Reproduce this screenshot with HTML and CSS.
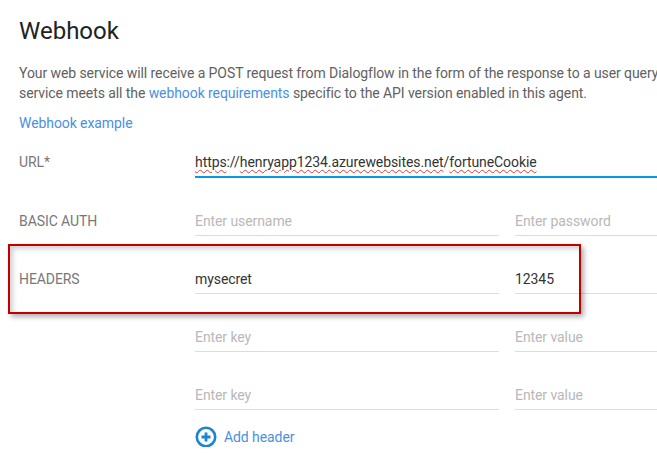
FILE: index.html
```html
<!DOCTYPE html>
<html>
<head>
<meta charset="utf-8">
<link rel="stylesheet" href="styles.css">
</head>
<body>
<div class="page">
  <h1 class="title">Webhook</h1>
  <p class="desc">
    <span class="line">Your web service will receive a POST request from Dialogflow in the form of the response to a user query</span>
    <span class="line">service meets all the <a class="link">webhook requirements</a> specific to the API version enabled in this agent.</span>
  </p>
  <div class="example"><a class="link">Webhook example</a></div>

  <div class="form">
    <div class="label">URL*</div>
    <div class="field field-wide field-focus"><span class="typo">https</span>://<span class="typo">henryapp1234.azurewebsites.net</span>/<span class="typo">fortuneCookie</span></div>

    <div class="label">BASIC AUTH</div>
    <div class="field placeholder">Enter username</div>
    <div class="field placeholder">Enter password</div>

    <div class="label">HEADERS</div>
    <div class="field">mysecret</div>
    <div class="field">12345</div>

    <div class="label"></div>
    <div class="field placeholder">Enter key</div>
    <div class="field placeholder">Enter value</div>

    <div class="label"></div>
    <div class="field placeholder">Enter key</div>
    <div class="field placeholder">Enter value</div>
  </div>

  <div class="add">
    <svg class="add-icon" width="22" height="22" viewBox="0 0 22 22">
      <circle cx="11" cy="11" r="9.2" fill="none" stroke="#1a84d6" stroke-width="2.6"/>
      <path d="M11 6.5v9M6.5 11h9" stroke="#1a84d6" stroke-width="2.8" stroke-linecap="butt"/>
    </svg>
    <span class="add-text">Add header</span>
  </div>

  <div class="highlight"></div>
</div>
</body>
</html>
```

FILE: styles.css
```css
html, body {
  margin: 0;
  padding: 0;
  background: #ffffff;
  overflow: hidden;
}

.page {
  position: relative;
  width: 900px;
  padding: 16px 0 0 19px;
  font-family: Roboto, "Liberation Sans", sans-serif;
  color: #616161;
  letter-spacing: -0.08px;
}

.title {
  margin: 0;
  font-size: 24px;
  line-height: 30px;
  font-weight: 400;
  color: #222222;
  letter-spacing: 0;
}

.desc {
  margin: 17px 0 0;
  font-size: 14px;
  line-height: 20px;
}

.line {
  display: block;
  white-space: nowrap;
}

.link {
  color: #4a90e2;
  text-decoration: none;
}

.example {
  margin-top: 10px;
  font-size: 14px;
  line-height: 20px;
}

.form {
  margin-top: 19px;
  display: grid;
  grid-template-columns: 160px 304px 304px;
  column-gap: 16px;
  row-gap: 33px;
  font-size: 14px;
  line-height: 20px;
}

.label {
  color: #787878;
  font-size: 14px;
  line-height: 20px;
}

.field {
  color: #333333;
  padding-bottom: 4px;
  border-bottom: 1px solid #dddddd;
  white-space: nowrap;
}

.field-wide {
  grid-column: 2 / 4;
}

.field-focus {
  border-bottom: 2px solid #039be5;
}

.placeholder {
  color: #b8b8b8;
}

.typo {
  text-decoration: underline wavy #e53935;
  text-decoration-thickness: 1px;
  text-underline-offset: 2px;
}

.add {
  margin: 16px 0 0 176px;
  display: flex;
  align-items: center;
  gap: 7px;
  height: 21px;
}

.add-icon {
  display: block;
  flex: none;
}

.add-text {
  color: #4a90e2;
  font-size: 14px;
  line-height: 20px;
}

.highlight {
  position: absolute;
  left: 8px;
  top: 244px;
  width: 573px;
  height: 70px;
  box-sizing: border-box;
  border: 2px solid #c00000;
  box-shadow: 3px 3px 5px rgba(0, 0, 0, 0.3), inset 3px 3px 5px rgba(0, 0, 0, 0.18);
}
```
